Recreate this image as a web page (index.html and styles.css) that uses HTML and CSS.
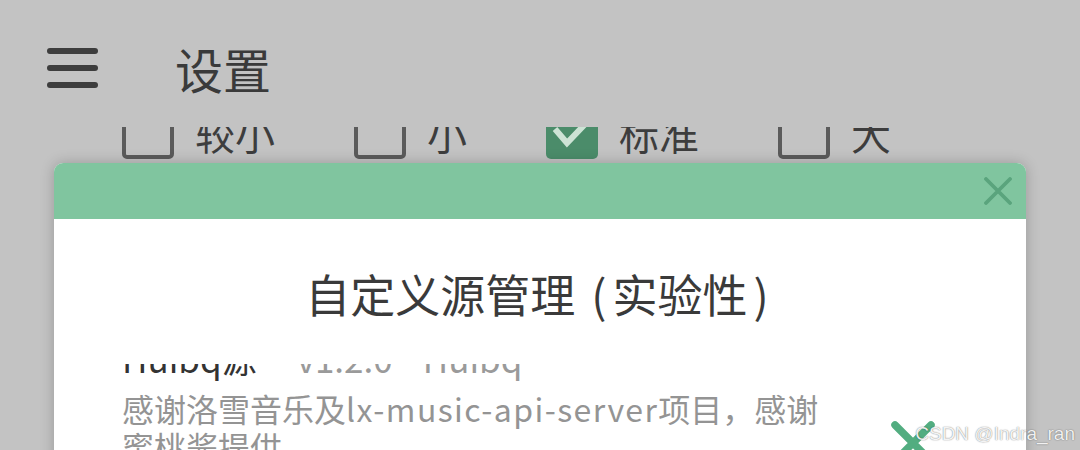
FILE: index.html
```html
<!DOCTYPE html>
<html lang="zh-CN">
<head>
  <meta charset="UTF-8">
  <meta name="viewport" content="width=device-width, initial-scale=1.0">
  <title>设置</title>
  <link rel="stylesheet" href="styles.css">
</head>
<body>

<div class="page">
  <header class="topbar">
    <div class="menu-icon">
      <span></span><span></span><span></span>
    </div>
    <h1>设置</h1>
  </header>

  <div class="settings-list">
    <div class="font-sizes">
      <label class="option"><span class="box"></span><span class="option-text">较小</span></label>
      <label class="option"><span class="box"></span><span class="option-text">小</span></label>
      <label class="option">
        <span class="box checked">
          <svg viewBox="0 0 52 52" width="52" height="52"><polyline points="9,22 21,36 43,13" fill="none" stroke="#cde3d5" stroke-width="6"/></svg>
        </span>
        <span class="option-text">标准</span>
      </label>
      <label class="option"><span class="box"></span><span class="option-text">大</span></label>
    </div>
  </div>
</div>

<div class="dialog">
  <div class="dialog-header">
    <svg class="dialog-close" viewBox="0 0 28 28" width="28" height="28">
      <path d="M2 2 L26 26 M26 2 L2 26" stroke="#5aa47d" stroke-width="3.8" stroke-linecap="round"/>
    </svg>
  </div>
  <div class="dialog-body">
    <h2>自定义源管理 <span class="paren">(</span>实验性<span class="paren">)</span></h2>
    <div class="source-list">
      <div class="source-item">
        <div class="source-info">
          <div class="source-title">Huibq源<span class="source-meta">v1.2.0</span><span class="source-meta">Huibq</span></div>
          <div class="source-desc">感谢洛雪音乐及<span class="latin">lx-music-api-server</span>项目，感谢蜜桃酱提供</div>
        </div>
        <div class="source-remove">
          <svg viewBox="0 0 46 46" width="46" height="46">
            <path d="M5 5 L41 41 M41 5 L5 41" stroke="#52ad80" stroke-width="7.5" stroke-linecap="round"/>
          </svg>
        </div>
      </div>
    </div>
  </div>
</div>

<div class="watermark">CSDN @Indra_ran</div>

</body>
</html>
```

FILE: styles.css
```css
body {
  margin: 0;
  padding: 0;
  width: 1080px;
  height: 450px;
  overflow: hidden;
  position: relative;
  background-color: #c3c3c3;
  font-family: "Noto Sans CJK SC", "Noto Sans", sans-serif;
  color: #3b3b3b;
}
.page {
  height: 450px;
}
.topbar {
  height: 127px;
  display: flex;
  align-items: center;
  padding-left: 47px;
  padding-top: 9px;
  box-sizing: border-box;
}
.menu-icon {
  width: 51px;
  display: flex;
  flex-direction: column;
  gap: 11.5px;
}
.menu-icon span {
  display: block;
  height: 5.5px;
  border-radius: 3px;
  background-color: #3d3d3d;
}
.topbar h1 {
  margin: 0 0 0 77px;
  font-size: 48px;
  font-weight: normal;
  line-height: 1;
  color: #3a3a3a;
}
.settings-list {
  height: 60px;
  overflow: hidden;
}
.font-sizes {
  display: flex;
  gap: 79px;
  padding-left: 122px;
  margin-top: -20px;
}
.option {
  display: flex;
  align-items: center;
  gap: 21px;
}
.box {
  width: 52px;
  height: 52px;
  box-sizing: border-box;
  border: 4.5px solid #5b5b5b;
  border-radius: 5px;
  display: block;
}
.box.checked {
  border: none;
  background-color: #4b8c6a;
}
.box svg {
  display: block;
}
.option-text {
  font-size: 40px;
  line-height: 52px;
  color: #3d3d3d;
}

/* dialog */
.dialog {
  position: absolute;
  left: 54px;
  top: 163px;
  width: 972px;
  height: 320px;
  border-radius: 9px 9px 0 0;
  background-color: #fff;
  box-shadow: 0 0 14px rgba(0, 0, 0, 0.22);
  overflow: hidden;
}
.dialog-header {
  height: 56px;
  background-color: #80c59f;
  display: flex;
  align-items: center;
  justify-content: flex-end;
  padding-right: 14px;
}
.dialog-close {
  display: block;
}
.dialog-body h2 {
  margin: 0;
  padding-top: 48px;
  text-align: center;
  font-size: 45px;
  font-weight: normal;
  line-height: 54px;
  color: #3a3a3a;
}
.paren {
  margin: 0 6px;
}
.source-list {
  margin-top: 43px;
  height: 120px;
  overflow: hidden;
}
.source-item {
  display: flex;
  margin-top: -29px;
  padding-left: 68px;
}
.source-info {
  width: 712px;
}
.source-title {
  font-size: 35px;
  line-height: 46px;
  color: #333;
}
.source-meta {
  margin-left: 40px;
  color: #9a9a9a;
}
.source-meta + .source-meta {
  margin-left: 30px;
}
.source-desc {
  margin-top: 8px;
  font-size: 32px;
  line-height: 38px;
  color: #949494;
}
.latin {
  letter-spacing: 1.4px;
}
.source-remove {
  padding-top: 85px;
  margin-left: 56px;
}
.source-remove svg {
  display: block;
}
.watermark {
  position: absolute;
  right: 5px;
  bottom: 5px;
  font-family: "Liberation Sans", Arial, sans-serif;
  font-size: 19px;
  color: rgba(255, 255, 255, 0.92);
  text-shadow: 0 0 1px rgba(0, 0, 0, 0.45), 0 0 2px rgba(0, 0, 0, 0.2);
}
```
